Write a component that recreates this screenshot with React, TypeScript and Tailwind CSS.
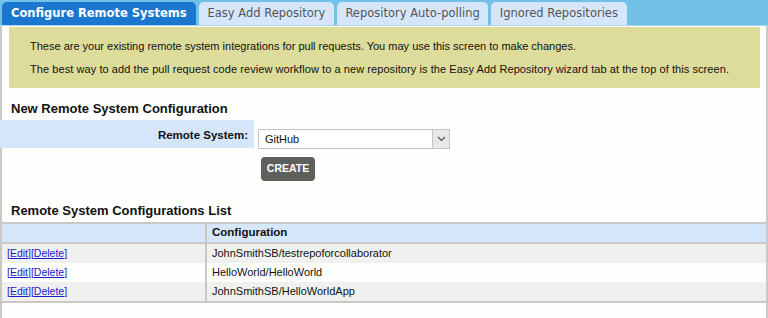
import React from 'react';

const tabs = ['Configure Remote Systems', 'Easy Add Repository', 'Repository Auto-polling', 'Ignored Repositories'];

const rows = ['JohnSmithSB/testrepoforcollaborator', 'HelloWorld/HelloWorld', 'JohnSmithSB/HelloWorldApp'];

export default function App() {
    return (
        <div className="w-[768px] h-[318px] bg-[#fefefd] overflow-hidden font-['Liberation_Sans',Arial,sans-serif]">
            {/* tab strip */}
            <div className="h-[26px] bg-[#72c1e9] flex items-end pl-[2px] gap-[3px] border-b border-[#a9d6ee]">
                {tabs.map((t, i) => (
                    <div
                        key={t}
                        className={
                            i === 0
                                ? "h-[23px] px-[9px] rounded-t-[5px] bg-[#1b76d0] text-white font-bold text-[11.5px] flex items-center font-['DejaVu_Sans',Verdana,sans-serif]"
                                : i === 2
                                ? "h-[23px] px-[8px] rounded-t-[5px] bg-[#d5e6fb] text-[#555] text-[11.5px] flex items-center font-['DejaVu_Sans',Verdana,sans-serif]"
                                : "h-[23px] px-[9px] rounded-t-[5px] bg-[#d5e6fb] text-[#555] text-[11.5px] flex items-center font-['DejaVu_Sans',Verdana,sans-serif]"
                        }
                    >
                        {t}
                    </div>
                ))}
            </div>

            {/* panel */}
            <div className="h-[292px] border-x-2 border-[#cac7c5] pt-px">
                <div className="mx-[7px] mr-[6px] h-[61px] bg-[#dedc9a] pl-[21px] flex flex-col justify-center gap-[10px] text-[11px] leading-[13px] text-[#111]">
                    <p>These are your existing remote system integrations for pull requests. You may use this screen to make changes.</p>
                    <p className="tracking-[0.07px]">The best way to add the pull request code review workflow to a new repository is the Easy Add Repository wizard tab at the top of this screen.</p>
                </div>

                <h2 className="mt-[12px] ml-[9px] text-[13px] font-bold text-[#111] leading-[18px]">New Remote System Configuration</h2>

                <div className="flex mt-[2px] -ml-[2px]">
                    <div className="w-[254px] h-[28px] bg-[#d6e6fa] flex items-center justify-end pr-[6px] pt-[4px] text-[11.5px] font-bold text-[#111]">
                        Remote System:
                    </div>
                    <div className="pl-[4px] pt-[9px]">
                        <div className="w-[192px] h-[20px] border border-[#c5c5c5] bg-white flex items-stretch">
                            <span className="flex-1 pl-[6px] text-[11px] leading-[18px] text-[#111]">GitHub</span>
                            <span className="w-[17px] bg-[#e8e8e8] border-l border-[#c5c5c5] flex items-center justify-center">
                                <svg width="9" height="6" viewBox="0 0 9 6"><path d="M1 1l3.5 3.5L8 1" fill="none" stroke="#555" strokeWidth="1.2" /></svg>
                            </span>
                        </div>
                    </div>
                </div>

                <div className="ml-[259px] mt-[8px] w-[54px] h-[24px] rounded-[4px] bg-[#5e605c] text-white text-[10.5px] font-bold flex items-center justify-center">
                    CREATE
                </div>

                <h2 className="mt-[21px] ml-[9px] text-[13px] font-bold text-[#111] leading-[18px]">Remote System Configurations List</h2>

                <div className="mt-[2px] border-y-2 border-[#cac7c5] text-[11px]">
                    <div className="flex h-[20px] bg-[#d6e6fb] border-b-2 border-[#cac7c5]">
                        <div className="w-[205px] border-r-2 border-[#cac7c5]" />
                        <div className="pl-[5px] font-bold text-[11.5px] text-[#111] flex items-center">Configuration</div>
                    </div>
                    {rows.map((r, i) => (
                        <div key={r} className={`flex h-[19px] ${i % 2 === 0 ? 'bg-[#f0f1ee]' : 'bg-[#fefefd]'}`}>
                            <div className="w-[205px] border-r-2 border-[#cac7c5] pl-[5px] flex items-center text-[10.5px]">
                                <a href="#" className="text-[#1a1ad0] underline">[Edit]</a>
                                <a href="#" className="text-[#1a1ad0] underline">[Delete]</a>
                            </div>
                            <div className="pl-[5px] flex items-center text-[#111]">{r}</div>
                        </div>
                    ))}
                </div>
            </div>
        </div>
    );
}
